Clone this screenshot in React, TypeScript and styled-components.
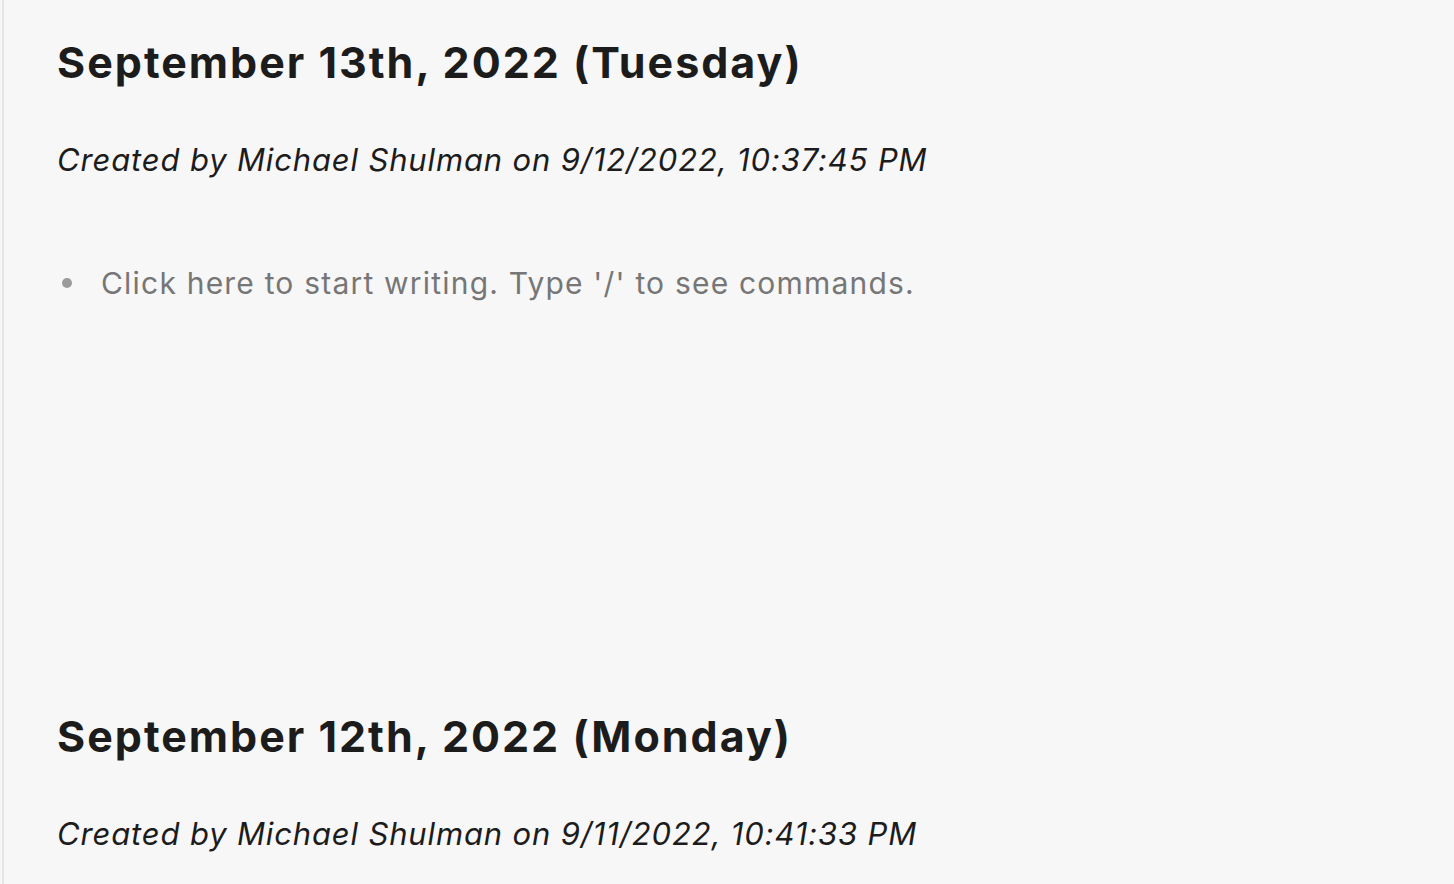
import React from 'react';
import styled, { createGlobalStyle } from 'styled-components';

const GlobalStyle = createGlobalStyle`
  html, body {
    margin: 0;
    padding: 0;
    background: #f7f7f7;
    font-family: Inter, "Noto Sans", sans-serif;
    overflow: hidden;
  }
`;

const Main = styled.div`
  height: 884px;
  margin-left: 2px;
  border-left: 2px solid #e6e6e6;
  padding: 0 0 0 53px;
  overflow: hidden;
`;

const Day = styled.section`
  min-height: 674px;
`;

const Title = styled.h1`
  margin: 0;
  padding-top: 34px;
  font-size: 43px;
  line-height: 56px;
  font-weight: 700;
  color: #1c1c1c;
  letter-spacing: 2px;
`;

const Meta = styled.div`
  margin-top: 50px;
  font-size: 31px;
  line-height: 40px;
  font-style: italic;
  color: #1c1c1c;
  letter-spacing: 0.85px;
`;

const Block = styled.div`
  display: flex;
  align-items: center;
  margin-top: 83px;
`;

const Dot = styled.span`
  width: 10px;
  height: 10px;
  border-radius: 50%;
  background: #9b9b9b;
  margin: 0 29px 0 5px;
`;

const Placeholder = styled.span`
  font-size: 30px;
  line-height: 40px;
  color: #767676;
  letter-spacing: 1.2px;
`;

interface DayNote {
  title: string;
  created: string;
  empty: boolean;
}

const notes: DayNote[] = [
  { title: 'September 13th, 2022 (Tuesday)', created: '9/12/2022, 10:37:45 PM', empty: true },
  { title: 'September 12th, 2022 (Monday)', created: '9/11/2022, 10:41:33 PM', empty: false },
];

function App() {
  return (
    <>
      <GlobalStyle />
      <Main>
        {notes.map((n) => (
          <Day key={n.title}>
            <Title>{n.title}</Title>
            <Meta>Created by Michael Shulman on {n.created}</Meta>
            {n.empty && (
              <Block>
                <Dot />
                <Placeholder>Click here to start writing. Type '/' to see commands.</Placeholder>
              </Block>
            )}
          </Day>
        ))}
      </Main>
    </>
  );
}

export default App;
